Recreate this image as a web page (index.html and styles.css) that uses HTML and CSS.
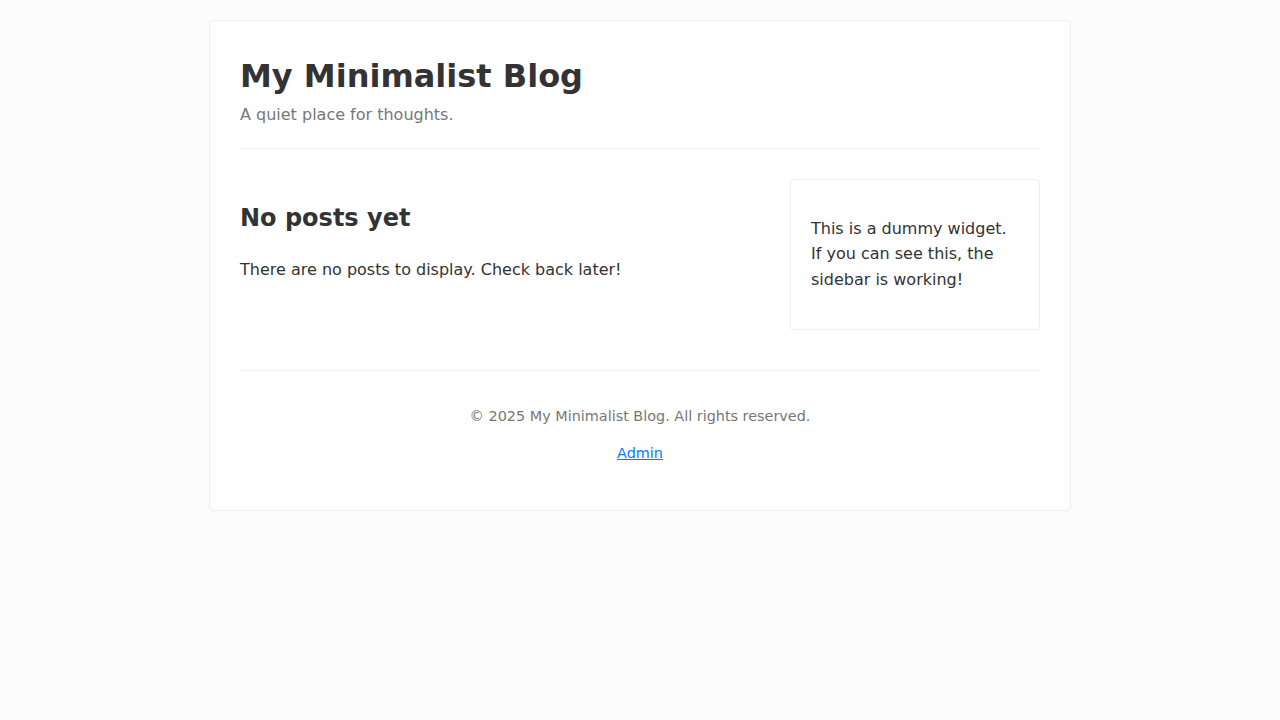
FILE: index.html
```html
<!DOCTYPE html>
<html lang="en">
<head>
<meta charset="utf-8">
<title>My Minimalist Blog</title>
<link rel="stylesheet" href="styles.css">
</head>
<body>
<div class="container">
  <header class="site-header">
    <h1 class="site-title">My Minimalist Blog</h1>
    <p class="site-tagline">A quiet place for thoughts.</p>
  </header>
  <div class="layout">
    <main class="content">
      <h2>No posts yet</h2>
      <p>There are no posts to display. Check back later!</p>
    </main>
    <aside class="sidebar">
      <div class="widget">
        <p>This is a dummy widget. If you can see this, the sidebar is working!</p>
      </div>
    </aside>
  </div>
  <footer class="site-footer">
    <p>&copy; 2025 My Minimalist Blog. All rights reserved.</p>
    <p><a href="#">Admin</a></p>
  </footer>
</div>
</body>
</html>
```

FILE: styles.css
```css
body {
  margin: 0;
  background: #fcfcfc;
  color: #333;
  font-family: "DejaVu Sans", sans-serif;
  font-size: 16px;
  line-height: 1.6;
}

.container {
  max-width: 800px;
  margin: 20px auto;
  padding: 30px;
  background: #fff;
  border: 1px solid #eee;
  border-radius: 5px;
}

.site-header {
  padding-bottom: 20px;
  border-bottom: 1px solid #eee;
  margin-bottom: 30px;
}

.site-title {
  margin: 0;
  font-size: 32px;
  font-weight: bold;
}

.site-tagline {
  margin: 0;
  color: #777;
}

.layout {
  display: flex;
  gap: 40px;
  align-items: flex-start;
}

.content {
  flex: 1;
}

.content h2 {
  font-size: 24px;
  margin: 0.83em 0;
}

.sidebar {
  width: 250px;
  flex-shrink: 0;
}

.widget {
  border: 1px solid #eee;
  border-radius: 4px;
  padding: 20px;
}

.site-footer {
  margin-top: 40px;
  padding-top: 20px;
  border-top: 1px solid #eee;
  text-align: center;
  color: #777;
  font-size: 0.9em;
}

.site-footer a {
  color: #007bff;
}
```
